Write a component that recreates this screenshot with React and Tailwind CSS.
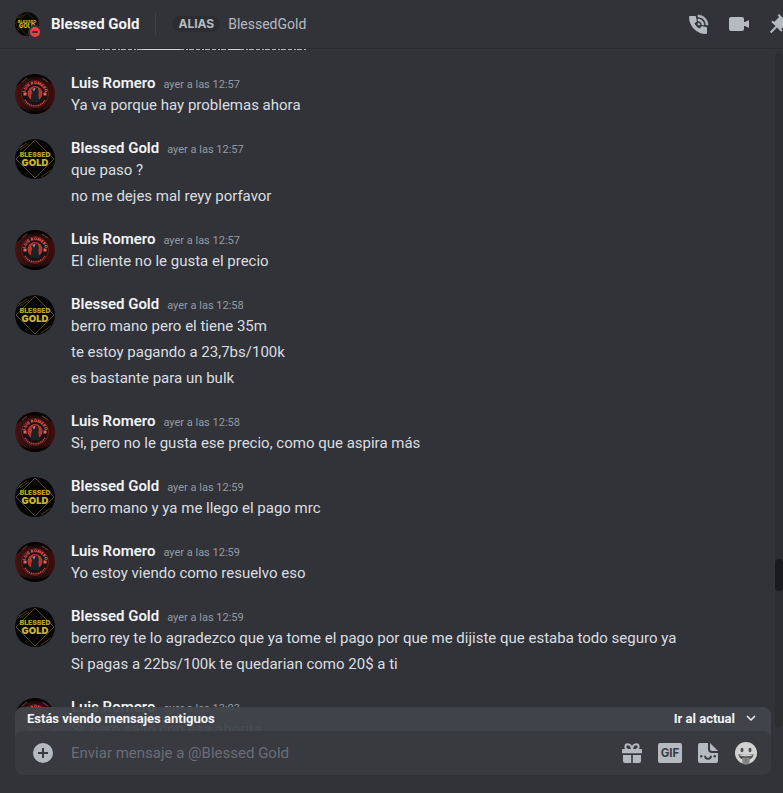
const CHANNEL = 'Blessed Gold';

const GROUPS = [
  { author: 'luis', time: 'ayer a las 12:57', lines: ['Ya va porque hay problemas ahora'] },
  { author: 'gold', time: 'ayer a las 12:57', lines: ['que paso ?', 'no me dejes mal reyy porfavor'] },
  { author: 'luis', time: 'ayer a las 12:57', lines: ['El cliente no le gusta el precio'] },
  {
    author: 'gold',
    time: 'ayer a las 12:58',
    lines: ['berro mano pero el tiene 35m', 'te estoy pagando a 23,7bs/100k', 'es bastante para un bulk'],
  },
  { author: 'luis', time: 'ayer a las 12:58', lines: ['Si, pero no le gusta ese precio, como que aspira más'] },
  { author: 'gold', time: 'ayer a las 12:59', lines: ['berro mano y ya me llego el pago mrc'] },
  { author: 'luis', time: 'ayer a las 12:59', lines: ['Yo estoy viendo como resuelvo eso'] },
  {
    author: 'gold',
    time: 'ayer a las 12:59',
    lines: [
      'berro rey te lo agradezco que ya tome el pago por que me dijiste que estaba todo seguro ya',
      'Si pagas a 22bs/100k te quedarian como 20$ a ti',
    ],
  },
  { author: 'luis', time: 'ayer a las 13:03', lines: ['Si, pero salio con esa ahorita'] },
];

const NAMES = { luis: 'Luis Romero', gold: 'Blessed Gold' };

function GoldAvatar({ className }) {
  return (
    <svg viewBox="0 0 40 40" className={`rounded-full ${className}`} aria-hidden="true">
      <rect width="40" height="40" fill="#050505" />
      <path d="M20 1 39 20 20 39 1 20Z" fill="none" stroke="#6b5a26" strokeWidth="0.8" />
      <path d="M4 9 12 4M5 11l9-6M26 38l10-7M29 39l9-7M2 12l5-5" stroke="#57491f" strokeWidth="0.8" />
      <text x="20" y="18" textAnchor="middle" fontSize="6.8" fontWeight="900" fill="#b79f2a" fontFamily="Inter, sans-serif">
        BLESSED
      </text>
      <text x="20" y="27" textAnchor="middle" fontSize="9.5" fontWeight="900" fill="#ccb433" fontFamily="Inter, sans-serif">
        GOLD
      </text>
    </svg>
  );
}

function LuisAvatar({ className, id }) {
  return (
    <svg viewBox="0 0 40 40" className={`rounded-full ${className}`} aria-hidden="true">
      <defs>
        <linearGradient id={`glow-${id}`} x1="0" x2="1" y1="0" y2="0">
          <stop offset="0" stopColor="#4a1210" />
          <stop offset="0.5" stopColor="#1c0a0b" />
          <stop offset="1" stopColor="#3d0f0e" />
        </linearGradient>
        <path id={`arc-${id}`} d="M10 18.500a10.200 10.200 0 0 1 20 0" />
      </defs>
      <rect width="40" height="40" fill={`url(#glow-${id})`} />
      <path d="M0 0h40v12Q30 3 20 3T0 14ZM0 40h40V29Q32 37 20 37T0 29Z" fill="#080405" />
      <path d="m7 8 5-4M27 4l6 4" stroke="#6a5450" strokeWidth="0.8" />
      <circle cx="20" cy="20" r="13.500" fill="#1c1013" stroke="#8f2d2b" strokeWidth="0.6" />
      <text fontSize="4" fontWeight="900" fill="#e2564e" fontFamily="Inter, sans-serif" textAnchor="middle">
        <textPath href={`#arc-${id}`} startOffset="50%">LUIS ROMERO</textPath>
      </text>
      <path d="M10 26a11.500 11.500 0 0 0 20 0" fill="none" stroke="#c2443e" strokeWidth="1.600" strokeDasharray="1.300 0.600" />
      <circle cx="20" cy="19.500" r="7.500" fill="#b8352e" />
      <path d="m15.500 28 .8-7 1-2-1-3 3-3 3.500 1 1 4-.5 3 1.500 7Z" fill="#1b2226" />
      <path d="M17.500 15.500l2-2 1 1-1.500 3Z" fill="#8f8f8f" />
      <path d="M8.500 18.500h3v3h-3zM28.500 18.500h3v3h-3z" fill="#e8635a" />
    </svg>
  );
}

function Message({ group, id }) {
  return (
    <li className="mb-[17px] flex gap-4 py-0.5 pl-[15px] pr-6">
      {group.author === 'gold' ? (
        <GoldAvatar className="mt-0.5 size-10 shrink-0" />
      ) : (
        <LuisAvatar id={id} className="mt-0.5 size-10 shrink-0" />
      )}
      <div className="min-w-0">
        <h3 className="flex h-[22px] items-baseline gap-2 leading-[22px]">
          <span className="text-[15px] font-semibold text-[#f2f3f5]">{NAMES[group.author]}</span>
          <time className="text-[11px] text-[#949ba4]">{group.time}</time>
        </h3>
        <div className="flex flex-col gap-1">
          {group.lines.map((line) => (
            <p key={line} className="text-[15px] leading-[22px] text-[#dbdee1]">
              {line}
            </p>
          ))}
        </div>
      </div>
    </li>
  );
}

function Header() {
  return (
    <header className="relative z-10 flex h-12 shrink-0 items-center bg-[#313338] pl-[15px]">
      <div className="relative size-6 shrink-0">
        <GoldAvatar className="size-6" />
        <span className="absolute -bottom-[3px] -right-[3px] flex size-3.5 items-center justify-center rounded-full border-2 border-[#313338] bg-[#f23f43]">
          <span className="h-0.5 w-1.5 rounded-full bg-[#313338]" />
        </span>
      </div>
      <h1 className="ml-3 shrink-0 text-[15px] font-bold text-[#f2f3f5]">{CHANNEL}</h1>
      <div className="mx-4 h-6 w-px shrink-0 bg-[#3f4147]" />
      <span className="rounded-full bg-[#2b2d31] px-1.5 font-['Inter',sans-serif] text-[12px] font-bold leading-4 text-[#b5bac1]">
        ALIAS
      </span>
      <span className="ml-2 text-[14px] text-[#b5bac1]">BlessedGold</span>
      <div className="-mr-2 ml-auto flex shrink-0 gap-4 text-[#b5bac1]">
        <button type="button" aria-label="Iniciar llamada de voz">
          <svg viewBox="0 0 24 24" className="size-6" fill="currentColor">
            <path d="M11 5V3c5.516 0 10 4.486 10 10h-2c0-4.410-3.589-8-8-8Zm6 8c0-3.310-2.693-6-6-6v2c2.206 0 4 1.794 4 4h2Zm-6-2v2h2c0-1.105-.896-2-2-2Z" stroke="currentColor" strokeWidth="0.5" />
            <path d="M3 4h5a1 1 0 0 1 1 .8l.8 4.200a1 1 0 0 1-.5 1.100L7.500 11.200c1.200 2.600 2.800 4.200 5.400 5.400l1.100-1.800a1 1 0 0 1 1.100-.5l4.100.8a1 1 0 0 1 .8 1V21a1 1 0 0 1-1 1C9.600 22 2 14.400 2 5a1 1 0 0 1 1-1Z" />
          </svg>
        </button>
        <button type="button" aria-label="Iniciar videollamada">
          <svg viewBox="0 0 24 24" className="size-6" fill="currentColor">
            <path d="M4 5h11a2 2 0 0 1 2 2v3h1l4-2v8l-4-2h-1v3a2 2 0 0 1-2 2H4a2 2 0 0 1-2-2V7a2 2 0 0 1 2-2Z" />
          </svg>
        </button>
        <button type="button" aria-label="Mensajes fijados">
          <svg viewBox="0 0 24 24" className="size-6" fill="currentColor">
            <path d="m22 12-9.900-9.900-1.415 1.413 1.415 1.415-4.950 4.949v.002L5.736 8.465 4.322 9.880l4.243 4.242-5.657 5.656 1.414 1.414 5.657-5.656 4.243 4.242 1.414-1.414-1.414-1.414L19.171 12h.001l1.414 1.414L22 12Z" />
          </svg>
        </button>
      </div>
    </header>
  );
}

function Composer() {
  return (
    <div className="relative mb-[18px] ml-[15px] mr-3 shrink-0">
      <div className="absolute inset-x-0 bottom-9 flex h-8 items-start justify-between rounded-t-lg bg-[#41444a]/95 px-3 text-[13px] font-bold leading-6 text-[#f2f3f5]">
        <button type="button">Estás viendo mensajes antiguos</button>
        <button type="button" className="flex items-center gap-2">
          Ir al actual
          <svg viewBox="0 0 16 16" className="size-4" fill="none" stroke="currentColor" strokeWidth="1.500">
            <path d="m4 5 4 4 4-4" />
          </svg>
        </button>
      </div>
      <form className="relative flex h-11 items-center rounded-lg bg-[#383a40] pl-4 pr-[13px] text-[#b5bac1]">
        <button type="button" aria-label="Adjuntar">
          <svg viewBox="0 0 24 24" className="size-6">
            <circle cx="12" cy="12" r="10" fill="currentColor" />
            <path d="M12 7v10M7 12h10" stroke="#383a40" strokeWidth="2" />
          </svg>
        </button>
        <input
          type="text"
          aria-label="Mensaje"
          placeholder="Enviar mensaje a @Blessed Gold"
          className="ml-4 min-w-0 flex-1 bg-transparent text-[15px] text-[#dbdee1] outline-none placeholder:text-[#6a6d75]"
        />
        <div className="flex items-center gap-3.5">
          <button type="button" aria-label="Enviar un regalo">
            <svg viewBox="0 0 24 24" className="size-6">
              <path d="M3 14h8.200v8H5a2 2 0 0 1-2-2Zm9.800 0H21v6a2 2 0 0 1-2 2h-6.200ZM3 8h18a1 1 0 0 1 1 1v3.200H2V9a1 1 0 0 1 1-1Z" fill="currentColor" />
              <path d="M12 8.500C11.500 5 10 3.200 7.800 3.200a2.400 2.400 0 0 0 0 4.900M12 8.500c.5-3.500 2-5.300 4.200-5.300a2.400 2.400 0 0 1 0 4.900" fill="none" stroke="currentColor" strokeWidth="1.900" />
            </svg>
          </button>
          <button type="button" aria-label="Elegir un GIF">
            <svg viewBox="0 0 24 24" className="size-6">
              <rect y="2" width="24" height="20" rx="2" fill="currentColor" />
              <text x="12" y="16" textAnchor="middle" fontSize="11.500" fontWeight="700" fill="#383a40" fontFamily="Inter, sans-serif">GIF</text>
            </svg>
          </button>
          <button type="button" aria-label="Elegir un sticker">
            <svg viewBox="0 0 24 24" className="size-6">
              <path d="M4 2h8v6a4 4 0 0 0 4 4h6v8a2 2 0 0 1-2 2H4a2 2 0 0 1-2-2V4a2 2 0 0 1 2-2Zm10 0 8 8h-6a2 2 0 0 1-2-2Z" fill="currentColor" />
              <circle cx="5.200" cy="15.200" r="1.200" fill="#383a40" />
              <circle cx="18.800" cy="15.200" r="1.200" fill="#383a40" />
              <path d="M9 14.800a3 3 0 0 0 6 0" fill="none" stroke="#383a40" strokeWidth="1.800" />
            </svg>
          </button>
          <button type="button" aria-label="Elegir un emoji">
            <svg viewBox="0 0 24 24" className="size-6">
              <circle cx="12" cy="12" r="11" fill="#d2d2d2" />
              <ellipse cx="8" cy="9" rx="1.500" ry="2.200" fill="#515151" />
              <ellipse cx="16" cy="9" rx="1.500" ry="2.200" fill="#515151" />
              <path d="M4.500 13q7.500 2 15 0c0 3-1.800 5-4.500 5.500H9C6.300 18 4.500 16 4.500 13Z" fill="#515151" />
              <path d="M5.300 13.500q6.700 1.500 13.400 0l-.5 1q-6.200 1.300-12.400 0Z" fill="#e6e6e6" />
              <path d="M8.300 16.500h7.400V20a3.700 3.700 0 0 1-7.400 0Z" fill="#858585" />
              <path d="M12 17v4" stroke="#666" strokeWidth="0.8" />
            </svg>
          </button>
        </div>
      </form>
    </div>
  );
}

function App() {
  return (
    <div className="flex h-screen flex-col overflow-hidden bg-[#313338] font-['Roboto',sans-serif]">
      <Header />
      <main className="flex min-h-0 flex-1 flex-col border-t border-[#2a2b2f]">
        <div className="relative min-h-0 flex-1 overflow-hidden">
          {/* bottom edge of the message scrolled under the header */}
          <svg viewBox="0 0 230 1" className="absolute -top-px left-[76px] z-10 h-0.5 w-[230px]" preserveAspectRatio="none" aria-hidden="true">
            <path d="M0 .5h20M66 .5h38M152 .5h12" stroke="#d0d2d4" />
            <path d="M20 .5h46M104 .5h48M164 .5h66" stroke="#b4b6ba" strokeDasharray="4 2 2 1 5 2" />
          </svg>
          <ol className="pt-[21px]">
            {GROUPS.map((group, i) => (
              <Message key={i} id={i} group={group} />
            ))}
          </ol>
          <div className="absolute bottom-1 right-0 top-1 w-2 rounded-full bg-[#2b2d31]">
            <div className="absolute inset-x-0 top-3/4 h-8 rounded-full bg-[#1a1b1e]" />
          </div>
        </div>
        <Composer />
      </main>
    </div>
  );
}

export default App;
